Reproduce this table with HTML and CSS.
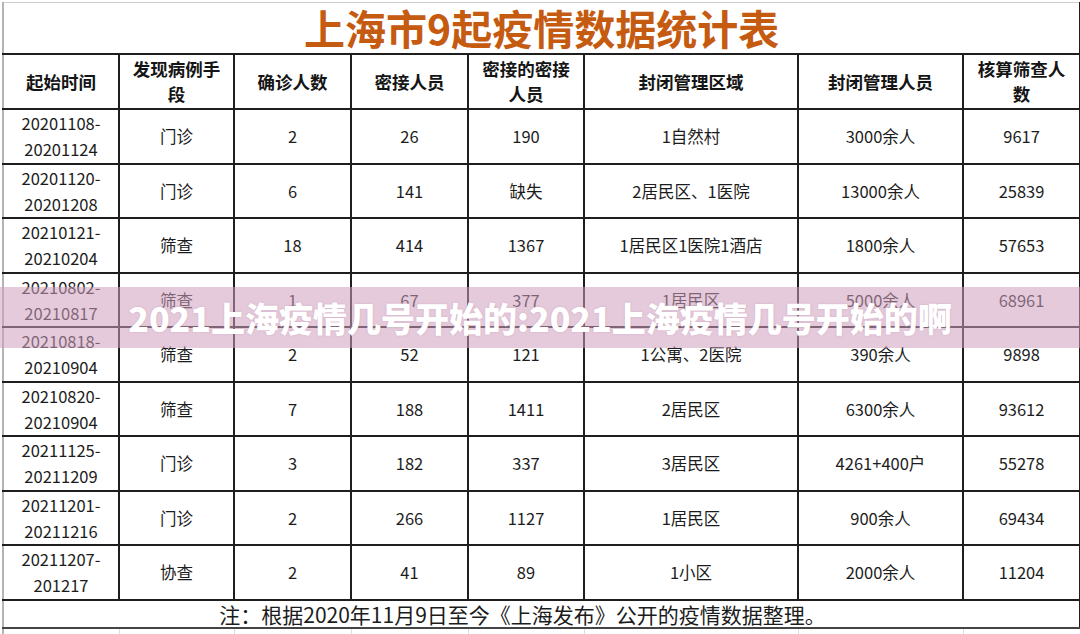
FILE: index.html
```html
<!DOCTYPE html>
<html lang="zh">
<head>
<meta charset="utf-8">
<link rel="stylesheet" href="styles.css">
</head>
<body>
<div class="page">
  <div class="gridtop"></div>
  <table class="sheet">
    <colgroup>
      <col class="c1"><col class="c2"><col class="c3"><col class="c4"><col class="c5"><col class="c6"><col class="c7"><col class="c8">
    </colgroup>
    <tr class="title-row"><td colspan="8" class="title">上海市9起疫情数据统计表</td></tr>
    <tr class="head">
      <th>起始时间</th><th>发现病例手<br>段</th><th>确诊人数</th><th>密接人员</th><th>密接的密接<br>人员</th><th>封闭管理区域</th><th>封闭管理人员</th><th>核算筛查人<br>数</th>
    </tr>
    <tr class="r55"><td>20201108-<br>20201124</td><td>门诊</td><td>2</td><td>26</td><td>190</td><td>1自然村</td><td>3000余人</td><td>9617</td></tr>
    <tr class="r54"><td>20201120-<br>20201208</td><td>门诊</td><td>6</td><td>141</td><td>缺失</td><td>2居民区、1医院</td><td>13000余人</td><td>25839</td></tr>
    <tr class="r55"><td>20210121-<br>20210204</td><td>筛查</td><td>18</td><td>414</td><td>1367</td><td>1居民区1医院1酒店</td><td>1800余人</td><td>57653</td></tr>
    <tr class="r54"><td>20210802-<br>20210817</td><td>筛查</td><td>1</td><td>67</td><td>377</td><td>1居民区</td><td>5000余人</td><td>68961</td></tr>
    <tr class="r55"><td>20210818-<br>20210904</td><td>筛查</td><td>2</td><td>52</td><td>121</td><td>1公寓、2医院</td><td>390余人</td><td>9898</td></tr>
    <tr class="r54"><td>20210820-<br>20210904</td><td>筛查</td><td>7</td><td>188</td><td>1411</td><td>2居民区</td><td>6300余人</td><td>93612</td></tr>
    <tr class="r55"><td>20211125-<br>20211209</td><td>门诊</td><td>3</td><td>182</td><td>337</td><td>3居民区</td><td>4261+400户</td><td>55278</td></tr>
    <tr class="r54"><td>20211201-<br>20211216</td><td>门诊</td><td>2</td><td>266</td><td>1127</td><td>1居民区</td><td>900余人</td><td>69434</td></tr>
    <tr class="r55"><td>20211207-<br>201217</td><td>协查</td><td>2</td><td>41</td><td>89</td><td>1小区</td><td>2000余人</td><td>11204</td></tr>
    <tr class="foot"><td colspan="8" class="note">注：根据2020年11月9日至今《上海发布》公开的疫情数据整理。</td></tr>
    <tr class="empty"><td></td><td></td><td></td><td></td><td></td><td></td><td></td><td></td></tr>
  </table>
  <div class="banner">2021上海疫情几号开始的:2021上海疫情几号开始的啊</div>
</div>
</body>
</html>
```

FILE: styles.css
```css
html, body {
  margin: 0;
  padding: 0;
  background: #ffffff;
}
body {
  width: 1080px;
  height: 634px;
  overflow: hidden;
  font-family: "Noto Sans CJK SC", "Noto Sans", sans-serif;
  color: #1c1c1c;
}
.page {
  position: relative;
  width: 1080px;
  height: 634px;
  overflow: hidden;
}
.gridtop {
  height: 2px;
}
.sheet {
  margin-left: 2px;
  border-collapse: collapse;
  table-layout: fixed;
  width: 1077px;
}
.c1 { width: 116px; }
.c2 { width: 115px; }
.c3 { width: 117px; }
.c4 { width: 117px; }
.c5 { width: 116px; }
.c6 { width: 214px; }
.c7 { width: 165px; }
.c8 { width: 117px; }

.sheet td, .sheet th {
  border: 2px solid #1e1e1e;
  padding: 0;
  text-align: center;
  vertical-align: middle;
  font-size: 16.5px;
  line-height: 26px;
  white-space: nowrap;
}
.sheet tr > :first-child {
  border-left: 2px solid #b4b4b4;
}
.title-row { height: 51px; }
.sheet td.title {
  border-top: 1px solid #cfcfcf;
  border-left: 2px solid #b4b4b4;
  border-right: 2px solid #1e1e1e;
  color: #c55a11;
  font-size: 41px;
  font-weight: 700;
  line-height: 48px;
  padding-bottom: 1px;
}
.head { height: 55px; }
.sheet th {
  font-size: 17.5px;
  font-weight: 700;
  line-height: 25px;
  color: #151515;
}
.r55 { height: 55px; }
.r54 { height: 54px; }
.foot { height: 28px; }
.sheet td.note {
  font-size: 21px;
  line-height: 24px;
  border-bottom: 2px solid #444;
  padding-right: 38px;
}
.empty { height: 20px; }
.sheet .empty td {
  border: none;
  border-right: 1px solid #dcdcdc;
}
.sheet .empty td:first-child {
  border-left: 2px solid #b4b4b4;
}

.banner {
  position: absolute;
  left: 0;
  top: 287px;
  width: 1080px;
  height: 61px;
  background: rgba(208, 158, 190, 0.55);
  color: #ffffff;
  font-family: "Noto Sans CJK SC", "Noto Sans", sans-serif;
  font-weight: 900;
  font-size: 34px;
  line-height: 61px;
  text-align: center;
  white-space: nowrap;
  text-shadow: 0 0 2px rgba(160, 110, 140, 0.35);
}
```
